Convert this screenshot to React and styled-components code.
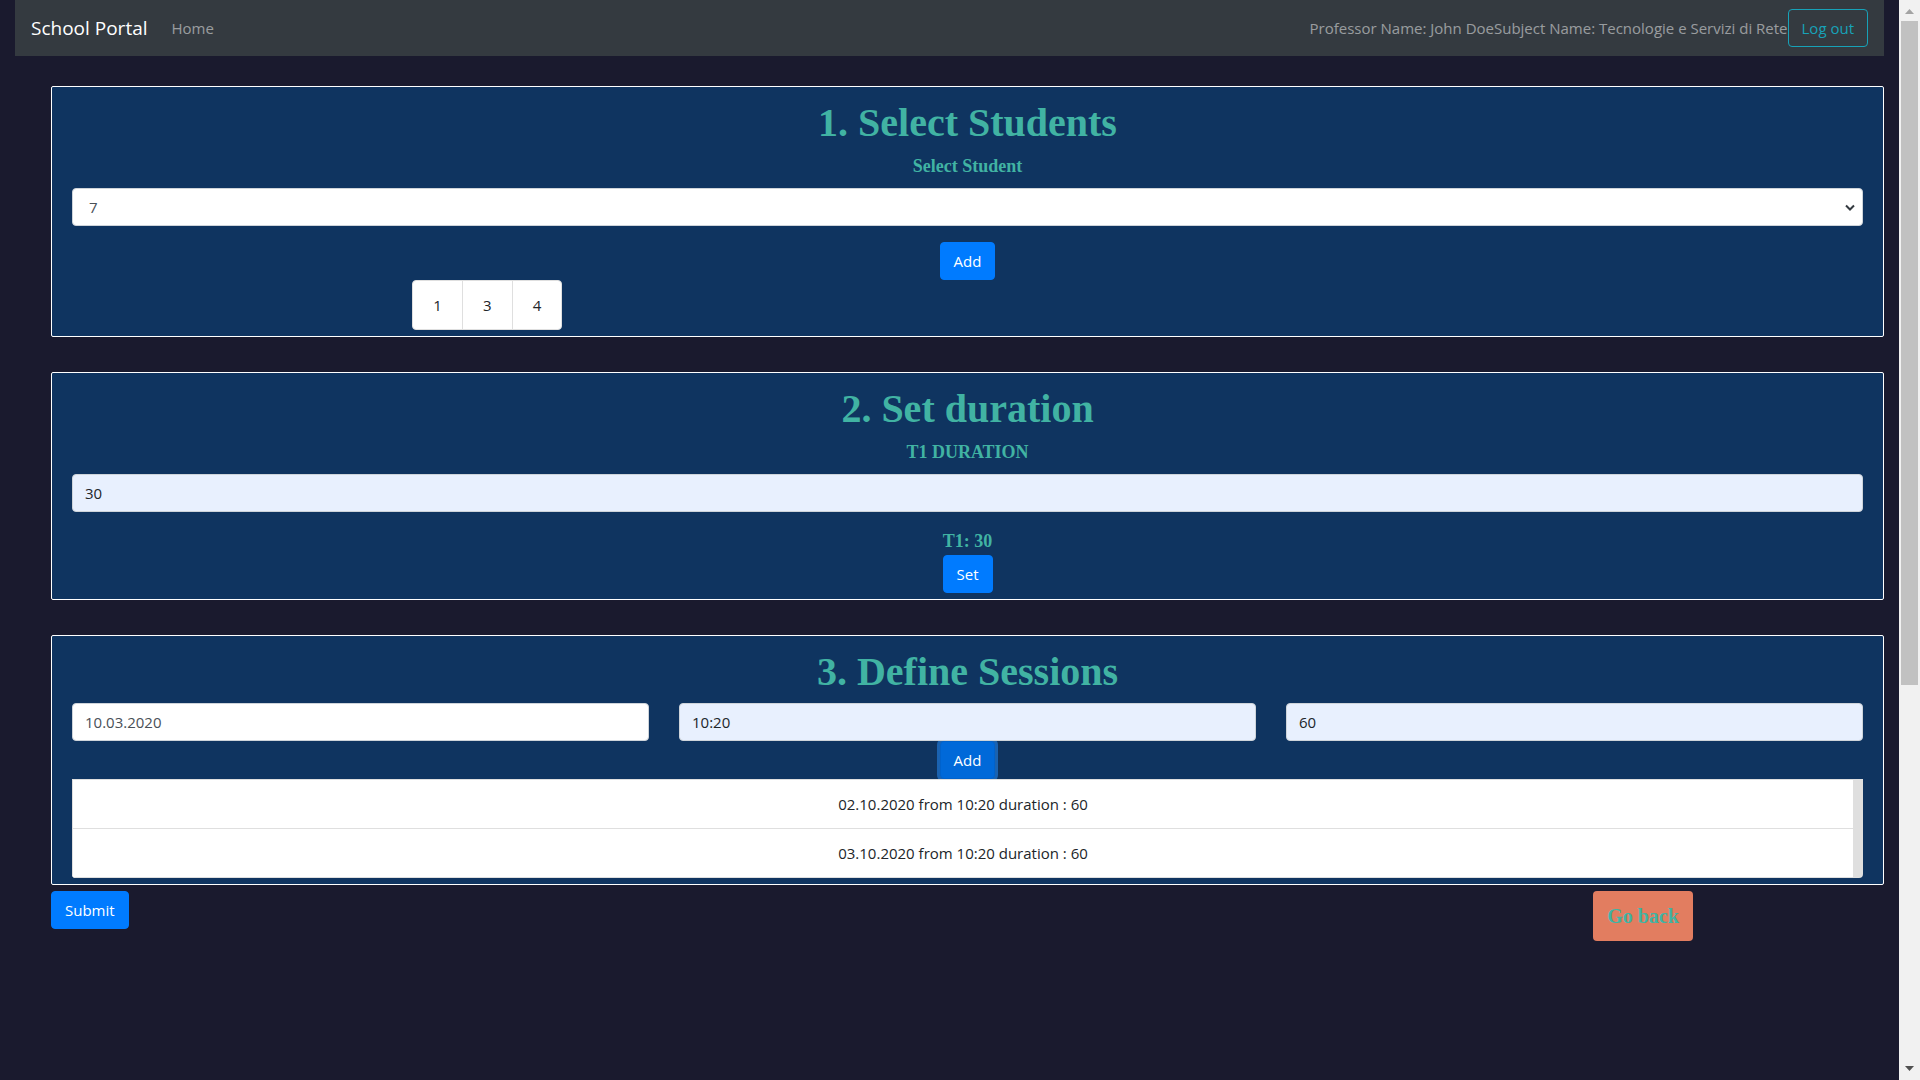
import React, { useState } from "react";
import styled, { createGlobalStyle, css } from "styled-components";

const sans = '"Open Sans", "Noto Sans", sans-serif';
const serif = '"Liberation Serif", "Times New Roman", serif';

const GlobalStyle = createGlobalStyle`
  *, *::before, *::after { box-sizing: border-box; }
  body {
    margin: 0;
    background: #1a1a2e;
    color: #212529;
    font: 400 15px/24px ${sans};
  }
  h1, p, ul { margin: 0; padding: 0; }
  ul { list-style: none; }
`;

const Shell = styled.div`
  display: flex;
  height: 100vh;
`;

const Page = styled.div`
  flex: 1;
  min-width: 0;
  overflow: hidden;
  padding: 0 15px;
`;

const Navbar = styled.nav`
  display: flex;
  align-items: center;
  height: 56px;
  padding: 0 16px;
  background: #343a40;
`;

const Brand = styled.a`
  margin-right: 24px;
  color: #fff;
  font-size: 19px;
  line-height: 30px;
  text-decoration: none;
`;

const NavLink = styled.a`
  color: rgba(255, 255, 255, 0.5);
  text-decoration: none;
`;

const NavText = styled.span`
  margin-left: auto;
  color: rgba(255, 255, 255, 0.5);
`;

const Button = styled.button`
  height: 38px;
  padding: 0 13px;
  border: 1px solid #007bff;
  border-radius: 4px;
  background: #007bff;
  color: #fff;
  font: 400 15px/24px ${sans};
  cursor: pointer;

  ${(p) =>
    p.$outline &&
    css`
      border-color: #17a2b8;
      background: transparent;
      color: #17a2b8;
    `}

  ${(p) =>
    p.$active &&
    css`
      border-color: #0062cc;
      background: #0069d9;
      box-shadow: 0 0 0 3px rgba(38, 143, 255, 0.5);
      clip-path: inset(0 -3px);
    `}
`;

const Main = styled.main`
  display: flex;
  flex-direction: column;
  gap: 35px;
  padding: 30px 0 0 36px;
`;

const Card = styled.section`
  display: flex;
  flex-direction: column;
  align-items: center;
  padding: 12px 20px 6px;
  border: 1px solid #fff;
  border-radius: 2px;
  background: #0f3460;
`;

const Title = styled.h1`
  margin-bottom: 7px;
  color: #41b3a3;
  font: 700 40px/48px ${serif};
`;

const Field = styled.div`
  display: flex;
  flex-direction: column;
  align-items: center;
  width: 100%;
  margin-bottom: 16px;
`;

const Label = styled.label`
  margin-bottom: 10px;
  color: #41b3a3;
  font: 700 18px/24px ${serif};
`;

const Summary = styled.p`
  color: #41b3a3;
  font: 700 18px/27px ${serif};
`;

const control = css`
  width: 100%;
  height: 38px;
  padding: 0 12px;
  border: 1px solid #ced4da;
  border-radius: 4px;
  font: 400 15px/24px ${sans};
  outline: none;
`;

const Input = styled.input`
  ${control}
  background: ${(p) => (p.$filled ? "#e8f0fe" : "#fff")};
  color: ${(p) => (p.$filled ? "#212529" : "#495057")};
`;

const SelectBox = styled.div`
  position: relative;
  width: 100%;
`;

const Select = styled.select`
  ${control}
  padding-left: 16px;
  appearance: none;
  background: #fff;
  color: #495057;
`;

const Chevron = styled.svg`
  position: absolute;
  top: 16px;
  right: 8px;
  width: 10px;
  height: 8px;
  pointer-events: none;
`;

const StudentList = styled.ul`
  display: flex;
  align-self: flex-start;
  width: 150px;
  margin-left: 19%;
  border: 1px solid #dfdfdf;
  border-radius: 4px;
  background: #fff;
  overflow: hidden;
`;

const Student = styled.li`
  flex: 1;
  padding: 12px 0;
  text-align: center;

  & + & {
    border-left: 1px solid #dfdfdf;
  }
`;

const SessionFields = styled.div`
  display: grid;
  grid-template-columns: repeat(3, 1fr);
  gap: 30px;
  width: 100%;
`;

const SessionList = styled.ul`
  width: 100%;
  padding-right: 10px;
  border-radius: 0 0 4px 4px;
  background: #dfdfdf;
  overflow: hidden;
`;

const Session = styled.li`
  padding: 12px 0;
  border: 1px solid #dfdfdf;
  border-top-width: ${(p) => (p.$first ? "1px" : "0")};
  border-right: 0;
  background: #fff;
  text-align: center;
`;

const Footer = styled.footer`
  display: flex;
  justify-content: space-between;
  align-items: flex-start;
  padding: 6px 191px 0 36px;
`;

const BackButton = styled.button`
  width: 100px;
  height: 50px;
  padding: 0;
  border: 0;
  border-radius: 4px;
  background: #e27d60;
  color: #41b3a3;
  font: 700 20px/30px ${serif};
  cursor: pointer;
`;

const Scrollbar = styled.div`
  display: flex;
  flex-direction: column;
  align-items: center;
  width: 21px;
  background: #f1f1f1;
`;

const ScrollArrow = styled.svg`
  width: 21px;
  height: 21px;
  fill: ${(p) => (p.$dim ? "#a3a3a3" : "#505050")};
`;

const ScrollTrack = styled.div`
  flex: 1;
  width: 17px;
`;

const ScrollThumb = styled.div`
  height: 64%;
  background: #c1c1c1;
`;

const sessions = [
  { date: "02.10.2020", from: "10:20", duration: 60 },
  { date: "03.10.2020", from: "10:20", duration: 60 },
];

export default function App() {
  const [duration, setDuration] = useState("30");

  return (
    <>
      <GlobalStyle />
      <Shell>
        <Page>
          <Navbar>
            <Brand href="#">School Portal</Brand>
            <NavLink href="#">Home</NavLink>
            <NavText>
              Professor Name: John DoeSubject Name: Tecnologie e Servizi di Rete
            </NavText>
            <Button type="button" $outline>Log out</Button>
          </Navbar>

          <Main>
            <Card>
              <Title>1. Select Students</Title>
              <Field>
                <Label htmlFor="student">Select Student</Label>
                <SelectBox>
                  <Select id="student" defaultValue="7">
                    <option>7</option>
                  </Select>
                  <Chevron viewBox="0 0 10 8" aria-hidden="true">
                    <path d="M1 1.5 5 5.5 9 1.5" fill="none" stroke="#343a40" strokeWidth="2" />
                  </Chevron>
                </SelectBox>
              </Field>
              <Button type="button">Add</Button>
              <StudentList>
                {[1, 3, 4].map((id) => (
                  <Student key={id}>{id}</Student>
                ))}
              </StudentList>
            </Card>

            <Card>
              <Title>2. Set duration</Title>
              <Field>
                <Label htmlFor="duration">T1 DURATION</Label>
                <Input
                  id="duration"
                  $filled
                  value={duration}
                  onChange={(e) => setDuration(e.target.value)}
                />
              </Field>
              <Summary>T1: {duration}</Summary>
              <Button type="button">Set</Button>
            </Card>

            <Card>
              <Title>3. Define Sessions</Title>
              <SessionFields>
                <Input aria-label="Date" defaultValue="10.03.2020" />
                <Input aria-label="Start time" $filled defaultValue="10:20" />
                <Input aria-label="Session duration" $filled defaultValue="60" />
              </SessionFields>
              <Button type="button" $active>Add</Button>
              <SessionList>
                {sessions.map((s, i) => (
                  <Session key={s.date} $first={i === 0}>
                    {s.date} from {s.from} duration : {s.duration}
                  </Session>
                ))}
              </SessionList>
            </Card>
          </Main>

          <Footer>
            <Button type="button">Submit</Button>
            <BackButton type="button">Go back</BackButton>
          </Footer>
        </Page>

        <Scrollbar aria-hidden="true">
          <ScrollArrow viewBox="0 0 21 21" $dim>
            <path d="M6 14 10.5 9 15 14z" />
          </ScrollArrow>
          <ScrollTrack>
            <ScrollThumb />
          </ScrollTrack>
          <ScrollArrow viewBox="0 0 21 21">
            <path d="M6 7 10.5 12 15 7z" />
          </ScrollArrow>
        </Scrollbar>
      </Shell>
    </>
  );
}
